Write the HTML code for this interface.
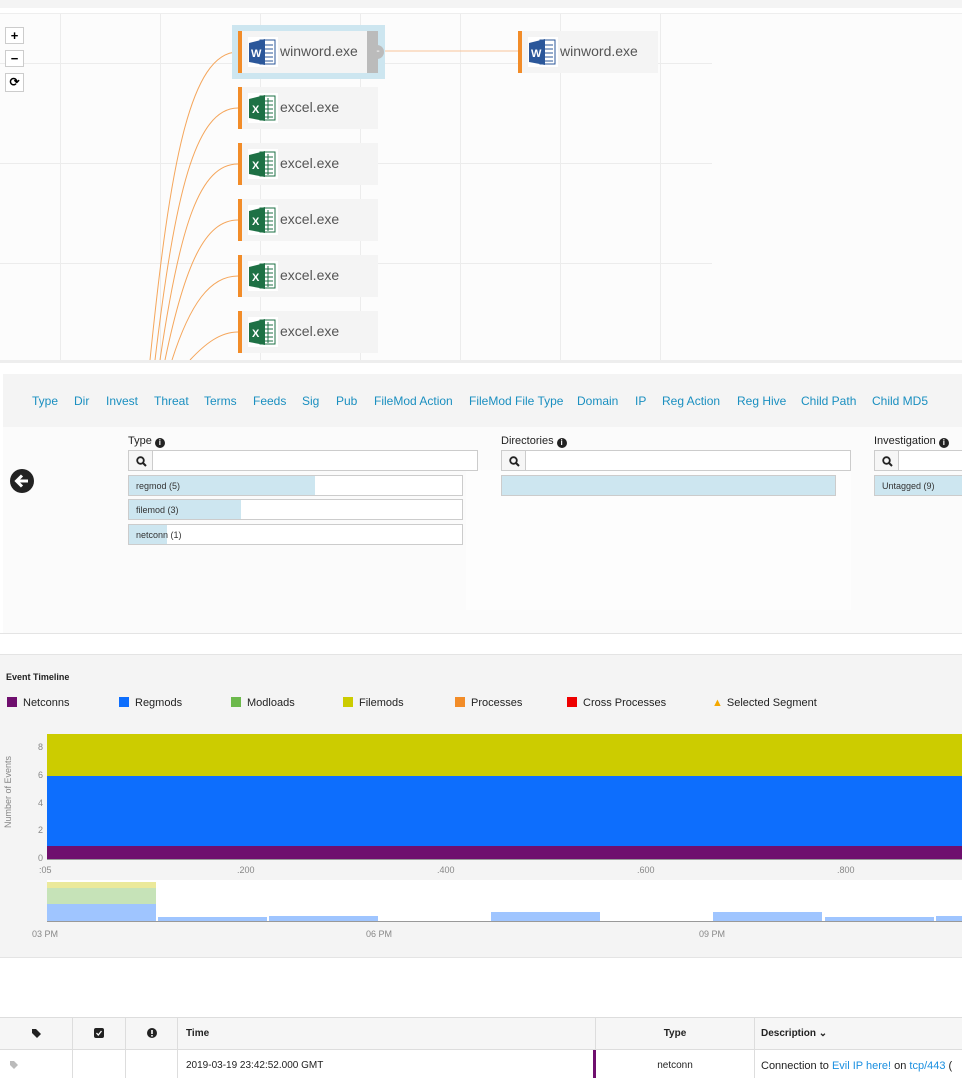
<!DOCTYPE html>
<html><head><meta charset="utf-8"><style>
*{box-sizing:border-box;margin:0;padding:0}
body{width:962px;height:1078px;overflow:hidden;background:#fff;font-family:"Liberation Sans",Arial,sans-serif;position:relative}
.a{position:absolute}
.node{position:absolute;width:140px;height:42px;background:#f4f4f4;border-left:4px solid #f28c28}
.node span{position:absolute;left:38px;top:12px;font-size:14px;color:#555}
.node svg{position:absolute;left:6px;top:6px}
.nav a{position:absolute;top:394px;font-size:12px;color:#1a8fc0;text-decoration:none}
.lbl{font-size:11px;color:#222}
.info{display:inline-block;width:10px;height:10px;border-radius:50%;background:#222;color:#fff;font-size:8px;text-align:center;line-height:10px;font-weight:bold;vertical-align:-1px}
.srch{position:absolute;height:21px;border:1px solid #ccc;background:#fff}
.srch i{position:absolute;left:0;top:0;width:24px;height:19px;border-right:1px solid #ccc;background:#f6f6f6}
.srch i svg{position:absolute;left:7px;top:5px}
.bar{position:absolute;height:21px;border:1px solid #ccc;background:#fff;font-size:9px;color:#333}
.bar b{position:absolute;left:0;top:0;bottom:0;background:#cde6f0;font-weight:normal}
.bar span{position:absolute;left:7px;top:5px}
.leg{position:absolute;top:697px;font-size:11px;color:#222}
.leg i{display:inline-block;width:10px;height:10px;margin-right:6px;vertical-align:-1px}
.ax{position:absolute;font-size:9px;color:#888}
.th{position:absolute;top:1018px;height:32px;border-right:1px solid #ddd;font-size:10px;font-weight:bold;color:#222}
.th svg{position:absolute;left:50%;top:10px;margin-left:-5px}
.td{position:absolute;top:1050px;height:28px;border-right:1px solid #ddd;font-size:10px;color:#222}
</style></head><body>
<div class="a" style="left:0;top:0;width:962px;height:8px;background:#f4f4f4"></div>
<div class="a" style="left:0;top:13px;width:962px;height:347px;background:#fcfcfc;border-top:1px solid #eee"></div>
<svg class="a" style="left:0;top:14px" width="962" height="346">
<g stroke="#ececec" stroke-width="1">
<line x1="60.5" y1="0" x2="60.5" y2="346"/><line x1="160.5" y1="0" x2="160.5" y2="346"/><line x1="260.5" y1="0" x2="260.5" y2="346"/><line x1="360.5" y1="0" x2="360.5" y2="346"/><line x1="460.5" y1="0" x2="460.5" y2="346"/><line x1="560.5" y1="0" x2="560.5" y2="346"/><line x1="660.5" y1="0" x2="660.5" y2="346"/>
<line x1="0" y1="49.5" x2="712" y2="49.5"/><line x1="0" y1="149.5" x2="712" y2="149.5"/><line x1="0" y1="249.5" x2="712" y2="249.5"/>
</g>
<g stroke="#f5a65b" stroke-width="1" fill="none">
<path d="M150 346 C170 150 190 38 238 38"/>
<path d="M155 346 C175 180 195 94 238 94"/>
<path d="M160 346 C180 210 200 150 238 150"/>
<path d="M165 346 C185 250 205 206 238 206"/>
<path d="M172 346 C190 290 210 262 238 262"/>
<path d="M190 346 C205 330 220 318 238 318"/>
<path d="M384 37 L520 37" stroke="#f8c49a"/>
</g></svg>
<div class="a" style="left:5px;top:27px;width:19px;height:17px;border:1px solid #ccc;background:#fff;font-size:13px;text-align:center;line-height:15px;font-weight:bold">+</div>
<div class="a" style="left:5px;top:50px;width:19px;height:17px;border:1px solid #ccc;background:#fff;font-size:13px;text-align:center;line-height:15px;font-weight:bold">−</div>
<div class="a" style="left:5px;top:73px;width:19px;height:19px;border:1px solid #ccc;background:#fff;font-size:12px;text-align:center;line-height:17px;font-weight:bold">⟳</div>
<div class="a" style="left:232px;top:25px;width:153px;height:54px;background:#cde6f0"></div>
<div class="node" style="left:238px;top:31px"><svg width="30" height="30"><rect x="0" y="0" width="30" height="30" fill="#fff"/><rect x="12" y="3" width="15" height="24" fill="#fff" stroke="#2b579a"/><g stroke="#2b579a"><line x1="15" y1="8" x2="25" y2="8"/><line x1="15" y1="12" x2="25" y2="12"/><line x1="15" y1="16" x2="25" y2="16"/><line x1="15" y1="20" x2="25" y2="20"/><line x1="15" y1="24" x2="25" y2="24"/></g><path d="M1 6 L17 2 L17 28 L1 25Z" fill="#2b579a"/><text x="3" y="20" fill="#fff" font-size="11" font-weight="bold" font-family="Liberation Sans">W</text></svg><span>winword.exe</span><div class="a" style="right:0;top:0;width:11px;height:42px;background:#bbb"></div><div class="a" style="right:-6px;top:14px;width:12px;height:14px;border-radius:0 7px 7px 0;background:#bbb;color:#fff;font-size:10px;line-height:13px;text-align:center">-</div></div>
<div class="node" style="left:518px;top:31px"><svg width="30" height="30"><rect x="0" y="0" width="30" height="30" fill="#fff"/><rect x="12" y="3" width="15" height="24" fill="#fff" stroke="#2b579a"/><g stroke="#2b579a"><line x1="15" y1="8" x2="25" y2="8"/><line x1="15" y1="12" x2="25" y2="12"/><line x1="15" y1="16" x2="25" y2="16"/><line x1="15" y1="20" x2="25" y2="20"/><line x1="15" y1="24" x2="25" y2="24"/></g><path d="M1 6 L17 2 L17 28 L1 25Z" fill="#2b579a"/><text x="3" y="20" fill="#fff" font-size="11" font-weight="bold" font-family="Liberation Sans">W</text></svg><span>winword.exe</span></div>
<div class="node" style="left:238px;top:87px"><svg width="30" height="30"><rect width="30" height="30" fill="#fff"/><rect x="12" y="3" width="15" height="24" fill="#fff" stroke="#1e7145"/><g stroke="#1e7145"><line x1="15" y1="8" x2="25" y2="8"/><line x1="15" y1="12" x2="25" y2="12"/><line x1="15" y1="16" x2="25" y2="16"/><line x1="15" y1="20" x2="25" y2="20"/><line x1="15" y1="24" x2="25" y2="24"/><line x1="20" y1="5" x2="20" y2="26"/></g><path d="M1 6 L17 2 L17 28 L1 25Z" fill="#1e7145"/><text x="4" y="20" fill="#fff" font-size="11" font-weight="bold" font-family="Liberation Sans">X</text></svg><span>excel.exe</span></div>
<div class="node" style="left:238px;top:143px"><svg width="30" height="30"><rect width="30" height="30" fill="#fff"/><rect x="12" y="3" width="15" height="24" fill="#fff" stroke="#1e7145"/><g stroke="#1e7145"><line x1="15" y1="8" x2="25" y2="8"/><line x1="15" y1="12" x2="25" y2="12"/><line x1="15" y1="16" x2="25" y2="16"/><line x1="15" y1="20" x2="25" y2="20"/><line x1="15" y1="24" x2="25" y2="24"/><line x1="20" y1="5" x2="20" y2="26"/></g><path d="M1 6 L17 2 L17 28 L1 25Z" fill="#1e7145"/><text x="4" y="20" fill="#fff" font-size="11" font-weight="bold" font-family="Liberation Sans">X</text></svg><span>excel.exe</span></div>
<div class="node" style="left:238px;top:199px"><svg width="30" height="30"><rect width="30" height="30" fill="#fff"/><rect x="12" y="3" width="15" height="24" fill="#fff" stroke="#1e7145"/><g stroke="#1e7145"><line x1="15" y1="8" x2="25" y2="8"/><line x1="15" y1="12" x2="25" y2="12"/><line x1="15" y1="16" x2="25" y2="16"/><line x1="15" y1="20" x2="25" y2="20"/><line x1="15" y1="24" x2="25" y2="24"/><line x1="20" y1="5" x2="20" y2="26"/></g><path d="M1 6 L17 2 L17 28 L1 25Z" fill="#1e7145"/><text x="4" y="20" fill="#fff" font-size="11" font-weight="bold" font-family="Liberation Sans">X</text></svg><span>excel.exe</span></div>
<div class="node" style="left:238px;top:255px"><svg width="30" height="30"><rect width="30" height="30" fill="#fff"/><rect x="12" y="3" width="15" height="24" fill="#fff" stroke="#1e7145"/><g stroke="#1e7145"><line x1="15" y1="8" x2="25" y2="8"/><line x1="15" y1="12" x2="25" y2="12"/><line x1="15" y1="16" x2="25" y2="16"/><line x1="15" y1="20" x2="25" y2="20"/><line x1="15" y1="24" x2="25" y2="24"/><line x1="20" y1="5" x2="20" y2="26"/></g><path d="M1 6 L17 2 L17 28 L1 25Z" fill="#1e7145"/><text x="4" y="20" fill="#fff" font-size="11" font-weight="bold" font-family="Liberation Sans">X</text></svg><span>excel.exe</span></div>
<div class="node" style="left:238px;top:311px"><svg width="30" height="30"><rect width="30" height="30" fill="#fff"/><rect x="12" y="3" width="15" height="24" fill="#fff" stroke="#1e7145"/><g stroke="#1e7145"><line x1="15" y1="8" x2="25" y2="8"/><line x1="15" y1="12" x2="25" y2="12"/><line x1="15" y1="16" x2="25" y2="16"/><line x1="15" y1="20" x2="25" y2="20"/><line x1="15" y1="24" x2="25" y2="24"/><line x1="20" y1="5" x2="20" y2="26"/></g><path d="M1 6 L17 2 L17 28 L1 25Z" fill="#1e7145"/><text x="4" y="20" fill="#fff" font-size="11" font-weight="bold" font-family="Liberation Sans">X</text></svg><span>excel.exe</span></div>
<div class="a" style="left:0;top:360px;width:962px;height:3px;background:#eee"></div>
<div class="a" style="left:3px;top:374px;width:959px;height:53px;background:#f4f4f4"></div>
<div class="nav"><a style="left:32px">Type</a><a style="left:74px">Dir</a><a style="left:106px">Invest</a><a style="left:154px">Threat</a><a style="left:204px">Terms</a><a style="left:253px">Feeds</a><a style="left:302px">Sig</a><a style="left:336px">Pub</a><a style="left:374px">FileMod Action</a><a style="left:469px">FileMod File Type</a><a style="left:577px">Domain</a><a style="left:635px">IP</a><a style="left:662px">Reg Action</a><a style="left:737px">Reg Hive</a><a style="left:801px">Child Path</a><a style="left:872px">Child MD5</a></div>
<div class="a" style="left:3px;top:427px;width:959px;height:206px;background:#fbfbfb"></div>
<div class="a" style="left:466px;top:470px;width:385px;height:140px;background:#fdfdfd"></div>
<div class="a" style="left:0;top:633px;width:962px;height:1px;background:#e4e4e4"></div>
<svg class="a" style="left:10px;top:469px" width="24" height="24"><circle cx="12" cy="12" r="12" fill="#222"/><path d="M18 12 H7 M12 6.5 L6.5 12 L12 17.5" stroke="#fff" stroke-width="3" fill="none"/></svg>
<div class="a lbl" style="left:128px;top:435px">Type <span class="info">i</span></div>
<div class="srch" style="left:128px;top:450px;width:350px"><i><svg width="11" height="11"><circle cx="4.5" cy="4.5" r="3.3" stroke="#222" stroke-width="1.8" fill="none"/><path d="M7 7 L10 10" stroke="#222" stroke-width="2"/></svg></i></div>
<div class="bar" style="left:128px;top:475px;width:335px"><b style="width:186px"></b><span>regmod (5)</span></div>
<div class="bar" style="left:128px;top:499px;width:335px"><b style="width:112px"></b><span>filemod (3)</span></div>
<div class="bar" style="left:128px;top:524px;width:335px"><b style="width:38px"></b><span>netconn (1)</span></div>
<div class="a lbl" style="left:501px;top:435px">Directories <span class="info">i</span></div>
<div class="srch" style="left:501px;top:450px;width:350px"><i><svg width="11" height="11"><circle cx="4.5" cy="4.5" r="3.3" stroke="#222" stroke-width="1.8" fill="none"/><path d="M7 7 L10 10" stroke="#222" stroke-width="2"/></svg></i></div>
<div class="bar" style="left:501px;top:475px;width:335px;background:#cde6f0"></div>
<div class="a lbl" style="left:874px;top:435px">Investigation <span class="info">i</span></div>
<div class="srch" style="left:874px;top:450px;width:100px"><i><svg width="11" height="11"><circle cx="4.5" cy="4.5" r="3.3" stroke="#222" stroke-width="1.8" fill="none"/><path d="M7 7 L10 10" stroke="#222" stroke-width="2"/></svg></i></div>
<div class="bar" style="left:874px;top:475px;width:100px;background:#cde6f0"><span>Untagged (9)</span></div>
<div class="a" style="left:0;top:654px;width:962px;height:304px;background:#f4f4f4;border-top:1px solid #e4e4e4;border-bottom:1px solid #e4e4e4"></div>
<div class="a" style="left:6px;top:672px;font-size:9px;font-weight:bold;color:#222">Event Timeline</div>
<div class="leg" style="left:7px"><i style="background:#6f0f6e"></i>Netconns</div>
<div class="leg" style="left:119px"><i style="background:#0d6efd"></i>Regmods</div>
<div class="leg" style="left:231px"><i style="background:#6cb94c"></i>Modloads</div>
<div class="leg" style="left:343px"><i style="background:#cccc00"></i>Filemods</div>
<div class="leg" style="left:455px"><i style="background:#f28c28"></i>Processes</div>
<div class="leg" style="left:567px"><i style="background:#e00"></i>Cross Processes</div>
<div class="leg" style="left:712px"><span style="color:#f4a800;font-size:11px;margin-right:4px">▲</span>Selected Segment</div>
<div class="a" style="left:47px;top:734px;width:915px;height:42px;background:#cccc00"></div>
<div class="a" style="left:47px;top:776px;width:915px;height:70px;background:#0d6efd"></div>
<div class="a" style="left:47px;top:846px;width:915px;height:13px;background:#6f0f6e"></div>
<div class="a" style="left:47px;top:859px;width:915px;height:1px;background:#999"></div>
<div class="ax" style="left:38px;top:742px">8</div><div class="ax" style="left:38px;top:770px">6</div><div class="ax" style="left:38px;top:798px">4</div><div class="ax" style="left:38px;top:825px">2</div><div class="ax" style="left:38px;top:853px">0</div>
<div class="ax" style="left:-32px;top:787px;transform:rotate(-90deg);width:80px;text-align:center;white-space:nowrap">Number of Events</div>
<div class="ax" style="left:39px;top:865px">:05</div><div class="ax" style="left:237px;top:865px">.200</div><div class="ax" style="left:437px;top:865px">.400</div><div class="ax" style="left:637px;top:865px">.600</div><div class="ax" style="left:837px;top:865px">.800</div>
<div class="a" style="left:47px;top:880px;width:915px;height:42px;background:#fff"></div>
<div class="a" style="left:47px;top:882px;width:109px;height:6px;background:#ebe99a"></div>
<div class="a" style="left:47px;top:888px;width:109px;height:16px;background:#c6e3b8"></div>
<div class="a" style="left:47px;top:904px;width:109px;height:17px;background:#9fc5ff"></div>
<div class="a" style="left:158px;top:917px;width:109px;height:4px;background:#9fc5ff"></div>
<div class="a" style="left:269px;top:916px;width:109px;height:5px;background:#9fc5ff"></div>
<div class="a" style="left:491px;top:912px;width:109px;height:9px;background:#9fc5ff"></div>
<div class="a" style="left:713px;top:912px;width:109px;height:9px;background:#9fc5ff"></div>
<div class="a" style="left:825px;top:917px;width:109px;height:4px;background:#9fc5ff"></div>
<div class="a" style="left:936px;top:916px;width:26px;height:5px;background:#9fc5ff"></div>
<div class="a" style="left:47px;top:921px;width:915px;height:1px;background:#999"></div>
<div class="ax" style="left:32px;top:929px">03 PM</div><div class="ax" style="left:366px;top:929px">06 PM</div><div class="ax" style="left:699px;top:929px">09 PM</div>
<div class="a" style="left:0;top:1017px;width:962px;height:61px;border-top:1px solid #ddd"></div>
<div class="a" style="left:0;top:1018px;width:962px;height:32px;background:#f6f6f6;border-bottom:1px solid #ddd"></div>
<div class="th" style="left:0;width:73px"><svg width="11" height="11"><path d="M1 1 H5 L10 6 L6 10 L1 5Z" fill="#222"/></svg></div>
<div class="th" style="left:73px;width:53px"><svg width="10" height="10"><rect width="10" height="10" rx="2" fill="#222"/><path d="M2.5 5 L4.3 7 L7.5 3" stroke="#fff" stroke-width="1.3" fill="none"/></svg></div>
<div class="th" style="left:126px;width:52px"><svg width="10" height="10"><circle cx="5" cy="5" r="5" fill="#222"/><rect x="4.2" y="2" width="1.6" height="4" fill="#fff"/><rect x="4.2" y="7" width="1.6" height="1.5" fill="#fff"/></svg></div>
<div class="th" style="left:178px;width:418px;padding:10px 8px">Time</div>
<div class="th" style="left:596px;width:159px;text-align:center;padding-top:10px">Type</div>
<div class="th" style="left:755px;width:207px;padding:10px 6px;border:0">Description ⌄</div>
<div class="td" style="left:0;width:73px"><svg class="a" style="left:9px;top:10px" width="10" height="10"><path d="M1 1 H5 L9 5 L5 9 L1 5Z" fill="#bbb"/></svg></div>
<div class="td" style="left:73px;width:53px"></div>
<div class="td" style="left:126px;width:52px"></div>
<div class="td" style="left:178px;width:418px;padding:10px 8px;border-right:3px solid #6f0f6e">2019-03-19 23:42:52.000 GMT</div>
<div class="td" style="left:596px;width:159px;text-align:center;padding-top:10px">netconn</div>
<div class="td" style="left:755px;width:207px;padding:10px 6px;border:0;font-size:11px;white-space:nowrap">Connection to <span style="color:#1a8fe0">Evil IP here!</span> on <span style="color:#1a8fe0">tcp/443</span> (</div>
</body></html>
